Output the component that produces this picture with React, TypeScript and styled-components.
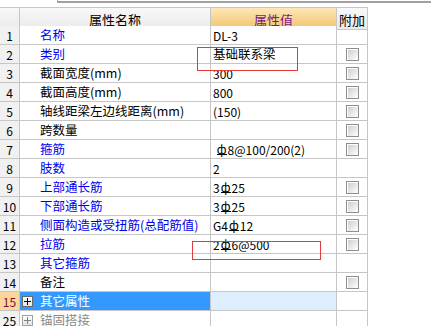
import React from "react";
import styled, { createGlobalStyle } from "styled-components";

const GlobalStyle = createGlobalStyle`
  html, body {
    margin: 0;
    padding: 0;
    background: #ffffff;
  }
  body {
    font-family: "Noto Sans CJK SC", "Liberation Sans", sans-serif;
    font-size: 12.5px;
    color: #000;
  }
`;

const Page = styled.div`
  position: relative;
  width: 437px;
  height: 326px;
  overflow: hidden;
`;

const TopFrame = styled.div`
  margin-left: 57px;
  width: 373px;
  height: 1px;
  border-left: 1px solid #a8a8a8;
  border-bottom: 2px solid #a0a0a0;
  margin-bottom: 4px;
`;

const Grid = styled.div`
  display: grid;
  grid-template-columns: 20px 191px 126px 31px;
  grid-auto-rows: 19px;
  width: 368px;
`;

const Cell = styled.div`
  box-sizing: border-box;
  border-right: 1px solid #c6c6c6;
  border-bottom: 1px solid #c6c6c6;
  display: flex;
  align-items: center;
  padding-top: 1px;
  white-space: nowrap;
  overflow: hidden;
  line-height: 1;
`;

const HeadCell = styled(Cell)<{ $tone?: "grey" | "gold" }>`
  height: 23px;
  border-top: 1px solid #c6c6c6;
  justify-content: center;
  font-size: 13px;
  color: ${(p) => (p.$tone === "gold" ? "#7a1a86" : "#000")};
  background: ${(p) =>
    p.$tone === "gold"
      ? "linear-gradient(#fde7b8, #f3c36c)"
      : "linear-gradient(#f8f8f8, #eaeaea)"};
`;

const NumCell = styled(Cell)<{ $active?: boolean }>`
  justify-content: center;
  font-size: 12px;
  background: ${(p) => (p.$active ? "#fcd79b" : "#f1f1f1")};
  color: ${(p) => (p.$active ? "#7a1030" : "#000")};
`;

const NameCell = styled(Cell)<{ $kind: "blue" | "black" | "group" | "muted" }>`
  padding-left: ${(p) => (p.$kind === "group" || p.$kind === "muted" ? "2px" : "20px")};
  color: ${(p) =>
    p.$kind === "blue"
      ? "#0000ee"
      : p.$kind === "group"
      ? "#ffffff"
      : p.$kind === "muted"
      ? "#8a8a8a"
      : "#000"};
  background: ${(p) => (p.$kind === "group" ? "#3399ff" : "#fff")};
  gap: 7px;
`;

const ValueCell = styled(Cell)<{ $selected?: boolean }>`
  padding-left: 2px;
  font-size: 12px;
  background: ${(p) => (p.$selected ? "#ddeeff" : "#fff")};
`;

const CjkValue = styled.span`
  font-size: 12.5px;
`;

const ExtraCell = styled(Cell)`
  justify-content: center;
  padding-top: 0;
`;

const Check = styled.span`
  box-sizing: border-box;
  width: 13px;
  height: 13px;
  border: 1px solid #8e8e8e;
  background: linear-gradient(135deg, #c9c9c9 0%, #e8e8e8 55%, #ffffff 100%);
  box-shadow: inset 1px 1px 0 #ffffff;
`;

const PlusBox = styled.span<{ $muted?: boolean }>`
  position: relative;
  box-sizing: border-box;
  width: 11px;
  height: 11px;
  border: 1px solid ${(p) => (p.$muted ? "#a0a0a0" : "#6a6a6a")};
  background: linear-gradient(#ffffff, #e4e4e4);
  flex: none;
  &::before,
  &::after {
    content: "";
    position: absolute;
    background: ${(p) => (p.$muted ? "#808080" : "#000")};
  }
  &::before {
    left: 1px;
    right: 1px;
    top: 4px;
    height: 1px;
  }
  &::after {
    top: 1px;
    bottom: 1px;
    left: 4px;
    width: 1px;
  }
`;

const Bar = styled.span`
  display: inline-block;
  margin: 0 1px;
  border-bottom: 1px solid #000;
  line-height: 10px;
`;

const Mark = styled.div<{ $x: number; $y: number; $w: number; $h: number }>`
  position: absolute;
  left: ${(p) => p.$x}px;
  top: ${(p) => p.$y}px;
  width: ${(p) => p.$w}px;
  height: ${(p) => p.$h}px;
  box-sizing: border-box;
  border: 1.5px solid #e53a3a;
  pointer-events: none;
`;

type Row = {
  no: number;
  name: string;
  kind: "blue" | "black";
  value: React.ReactNode;
  check: boolean;
};

const rebar = (pre: string, post: string) => (
  <>
    {pre}
    <Bar>ф</Bar>
    {post}
  </>
);

const rows: Row[] = [
  { no: 1, name: "名称", kind: "blue", value: "DL-3", check: false },
  { no: 2, name: "类别", kind: "blue", value: <CjkValue>基础联系梁</CjkValue>, check: true },
  { no: 3, name: "截面宽度(mm)", kind: "black", value: "300", check: true },
  { no: 4, name: "截面高度(mm)", kind: "black", value: "800", check: true },
  { no: 5, name: "轴线距梁左边线距离(mm)", kind: "black", value: "(150)", check: true },
  { no: 6, name: "跨数量", kind: "black", value: "", check: true },
  { no: 7, name: "箍筋", kind: "blue", value: rebar("\u00a0", "8@100/200(2)"), check: true },
  { no: 8, name: "肢数", kind: "blue", value: "2", check: false },
  { no: 9, name: "上部通长筋", kind: "blue", value: rebar("3", "25"), check: true },
  { no: 10, name: "下部通长筋", kind: "blue", value: rebar("3", "25"), check: true },
  { no: 11, name: "侧面构造或受扭筋(总配筋值)", kind: "blue", value: rebar("G4", "12"), check: true },
  { no: 12, name: "拉筋", kind: "blue", value: rebar("2", "6@500"), check: true },
  { no: 13, name: "其它箍筋", kind: "blue", value: "", check: false },
  { no: 14, name: "备注", kind: "black", value: "", check: true },
];

const App = () => {
  return (
    <Page>
      <GlobalStyle />
      <TopFrame />
      <Grid>
        <HeadCell />
        <HeadCell>属性名称</HeadCell>
        <HeadCell $tone="gold">属性值</HeadCell>
        <HeadCell>附加</HeadCell>

        {rows.map((r) => (
          <React.Fragment key={r.no}>
            <NumCell>{r.no}</NumCell>
            <NameCell $kind={r.kind}>{r.name}</NameCell>
            <ValueCell>{r.value}</ValueCell>
            <ExtraCell>{r.check && <Check />}</ExtraCell>
          </React.Fragment>
        ))}

        <NumCell $active>15</NumCell>
        <NameCell $kind="group">
          <PlusBox />
          其它属性
        </NameCell>
        <ValueCell $selected />
        <ExtraCell />

        <NumCell>25</NumCell>
        <NameCell $kind="muted">
          <PlusBox $muted />
          锚固搭接
        </NameCell>
        <ValueCell />
        <ExtraCell />
      </Grid>
      <Mark $x={197} $y={47} $w={101} $h={24} />
      <Mark $x={192} $y={241} $w={129} $h={19} />
    </Page>
  );
};

export default App;
